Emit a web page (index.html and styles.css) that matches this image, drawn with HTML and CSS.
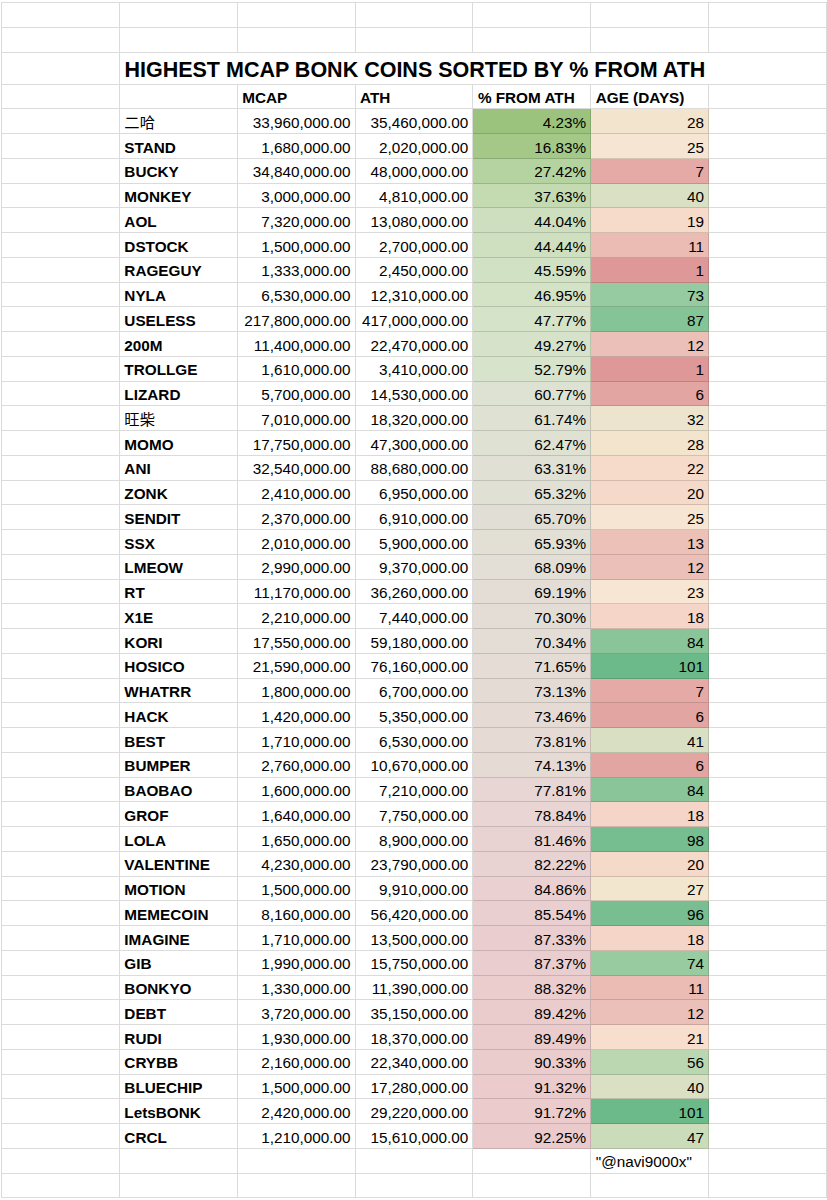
FILE: index.html
```html
<!DOCTYPE html>
<html lang="en">
<head>
<meta charset="utf-8">
<title>Highest MCAP BONK coins sorted by % from ATH</title>
<link rel="stylesheet" href="styles.css">
</head>
<body>
<div class="sheet">
  <div class="row"><div class="c"></div><div class="c"></div><div class="c"></div><div class="c"></div><div class="c"></div><div class="c"></div><div class="c"></div></div>
  <div class="row"><div class="c"></div><div class="c"></div><div class="c"></div><div class="c"></div><div class="c"></div><div class="c"></div><div class="c"></div></div>
  <div class="row title"><div class="c"></div><div class="c t">HIGHEST MCAP BONK COINS SORTED BY % FROM ATH</div></div>
  <div class="row"><div class="c"></div><div class="c"></div><div class="c h">MCAP</div><div class="c h">ATH</div><div class="c h">% FROM ATH</div><div class="c h">AGE (DAYS)</div><div class="c"></div></div>

  <div class="row"><div class="c"></div><div class="c n cjk">二哈</div><div class="c r">33,960,000.00</div><div class="c r">35,460,000.00</div><div class="c r" style="background:#9bc37d">4.23%</div><div class="c r" style="background:#f2e4cd">28</div><div class="c"></div></div>
  <div class="row"><div class="c"></div><div class="c n">STAND</div><div class="c r">1,680,000.00</div><div class="c r">2,020,000.00</div><div class="c r" style="background:#a3c888">16.83%</div><div class="c r" style="background:#f6e5d2">25</div><div class="c"></div></div>
  <div class="row"><div class="c"></div><div class="c n">BUCKY</div><div class="c r">34,840,000.00</div><div class="c r">48,000,000.00</div><div class="c r" style="background:#b4d3a0">27.42%</div><div class="c r" style="background:#e5aaa6">7</div><div class="c"></div></div>
  <div class="row"><div class="c"></div><div class="c n">MONKEY</div><div class="c r">3,000,000.00</div><div class="c r">4,810,000.00</div><div class="c r" style="background:#c4dbb2">37.63%</div><div class="c r" style="background:#dae0c4">40</div><div class="c"></div></div>
  <div class="row"><div class="c"></div><div class="c n">AOL</div><div class="c r">7,320,000.00</div><div class="c r">13,080,000.00</div><div class="c r" style="background:#cddfbe">44.04%</div><div class="c r" style="background:#f6daca">19</div><div class="c"></div></div>
  <div class="row"><div class="c"></div><div class="c n">DSTOCK</div><div class="c r">1,500,000.00</div><div class="c r">2,700,000.00</div><div class="c r" style="background:#cee0bf">44.44%</div><div class="c r" style="background:#eabcb4">11</div><div class="c"></div></div>
  <div class="row"><div class="c"></div><div class="c n">RAGEGUY</div><div class="c r">1,333,000.00</div><div class="c r">2,450,000.00</div><div class="c r" style="background:#d1e1c3">45.59%</div><div class="c r" style="background:#df9898">1</div><div class="c"></div></div>
  <div class="row"><div class="c"></div><div class="c n">NYLA</div><div class="c r">6,530,000.00</div><div class="c r">12,310,000.00</div><div class="c r" style="background:#d4e3c6">46.95%</div><div class="c r" style="background:#96caa0">73</div><div class="c"></div></div>
  <div class="row"><div class="c"></div><div class="c n">USELESS</div><div class="c r">217,800,000.00</div><div class="c r">417,000,000.00</div><div class="c r" style="background:#d5e3c8">47.77%</div><div class="c r" style="background:#85c496">87</div><div class="c"></div></div>
  <div class="row"><div class="c"></div><div class="c n">200M</div><div class="c r">11,400,000.00</div><div class="c r">22,470,000.00</div><div class="c r" style="background:#d6e3ca">49.27%</div><div class="c r" style="background:#ebc0b8">12</div><div class="c"></div></div>
  <div class="row"><div class="c"></div><div class="c n">TROLLGE</div><div class="c r">1,610,000.00</div><div class="c r">3,410,000.00</div><div class="c r" style="background:#d8e3cb">52.79%</div><div class="c r" style="background:#df9898">1</div><div class="c"></div></div>
  <div class="row"><div class="c"></div><div class="c n">LIZARD</div><div class="c r">5,700,000.00</div><div class="c r">14,530,000.00</div><div class="c r" style="background:#dee2d2">60.77%</div><div class="c r" style="background:#e3a5a2">6</div><div class="c"></div></div>
  <div class="row"><div class="c"></div><div class="c n cjk">旺柴</div><div class="c r">7,010,000.00</div><div class="c r">18,320,000.00</div><div class="c r" style="background:#dfe2d2">61.74%</div><div class="c r" style="background:#ede4cd">32</div><div class="c"></div></div>
  <div class="row"><div class="c"></div><div class="c n">MOMO</div><div class="c r">17,750,000.00</div><div class="c r">47,300,000.00</div><div class="c r" style="background:#dfe1d3">62.47%</div><div class="c r" style="background:#f2e4cd">28</div><div class="c"></div></div>
  <div class="row"><div class="c"></div><div class="c n">ANI</div><div class="c r">32,540,000.00</div><div class="c r">88,680,000.00</div><div class="c r" style="background:#e0e1d4">63.31%</div><div class="c r" style="background:#f6dbcb">22</div><div class="c"></div></div>
  <div class="row"><div class="c"></div><div class="c n">ZONK</div><div class="c r">2,410,000.00</div><div class="c r">6,950,000.00</div><div class="c r" style="background:#e1e0d5">65.32%</div><div class="c r" style="background:#f5d9c9">20</div><div class="c"></div></div>
  <div class="row"><div class="c"></div><div class="c n">SENDIT</div><div class="c r">2,370,000.00</div><div class="c r">6,910,000.00</div><div class="c r" style="background:#e1dfd5">65.70%</div><div class="c r" style="background:#f6e5d2">25</div><div class="c"></div></div>
  <div class="row"><div class="c"></div><div class="c n">SSX</div><div class="c r">2,010,000.00</div><div class="c r">5,900,000.00</div><div class="c r" style="background:#e2dfd5">65.93%</div><div class="c r" style="background:#ebc1b8">13</div><div class="c"></div></div>
  <div class="row"><div class="c"></div><div class="c n">LMEOW</div><div class="c r">2,990,000.00</div><div class="c r">9,370,000.00</div><div class="c r" style="background:#e3ded6">68.09%</div><div class="c r" style="background:#ebc0b8">12</div><div class="c"></div></div>
  <div class="row"><div class="c"></div><div class="c n">RT</div><div class="c r">11,170,000.00</div><div class="c r">36,260,000.00</div><div class="c r" style="background:#e3ddd6">69.19%</div><div class="c r" style="background:#f8e6d4">23</div><div class="c"></div></div>
  <div class="row"><div class="c"></div><div class="c n">X1E</div><div class="c r">2,210,000.00</div><div class="c r">7,440,000.00</div><div class="c r" style="background:#e4ddd6">70.30%</div><div class="c r" style="background:#f4d5c8">18</div><div class="c"></div></div>
  <div class="row"><div class="c"></div><div class="c n">KORI</div><div class="c r">17,550,000.00</div><div class="c r">59,180,000.00</div><div class="c r" style="background:#e4ddd6">70.34%</div><div class="c r" style="background:#8ac599">84</div><div class="c"></div></div>
  <div class="row"><div class="c"></div><div class="c n">HOSICO</div><div class="c r">21,590,000.00</div><div class="c r">76,160,000.00</div><div class="c r" style="background:#e5dcd6">71.65%</div><div class="c r" style="background:#6cb98a">101</div><div class="c"></div></div>
  <div class="row"><div class="c"></div><div class="c n">WHATRR</div><div class="c r">1,800,000.00</div><div class="c r">6,700,000.00</div><div class="c r" style="background:#e5dbd5">73.13%</div><div class="c r" style="background:#e5aaa6">7</div><div class="c"></div></div>
  <div class="row"><div class="c"></div><div class="c n">HACK</div><div class="c r">1,420,000.00</div><div class="c r">5,350,000.00</div><div class="c r" style="background:#e6dad5">73.46%</div><div class="c r" style="background:#e3a5a2">6</div><div class="c"></div></div>
  <div class="row"><div class="c"></div><div class="c n">BEST</div><div class="c r">1,710,000.00</div><div class="c r">6,530,000.00</div><div class="c r" style="background:#e6dad5">73.81%</div><div class="c r" style="background:#d8dfc3">41</div><div class="c"></div></div>
  <div class="row"><div class="c"></div><div class="c n">BUMPER</div><div class="c r">2,760,000.00</div><div class="c r">10,670,000.00</div><div class="c r" style="background:#e6dad5">74.13%</div><div class="c r" style="background:#e3a5a2">6</div><div class="c"></div></div>
  <div class="row"><div class="c"></div><div class="c n">BAOBAO</div><div class="c r">1,600,000.00</div><div class="c r">7,210,000.00</div><div class="c r" style="background:#e8d6d4">77.81%</div><div class="c r" style="background:#8ac599">84</div><div class="c"></div></div>
  <div class="row"><div class="c"></div><div class="c n">GROF</div><div class="c r">1,640,000.00</div><div class="c r">7,750,000.00</div><div class="c r" style="background:#e8d5d4">78.84%</div><div class="c r" style="background:#f4d5c8">18</div><div class="c"></div></div>
  <div class="row"><div class="c"></div><div class="c n">LOLA</div><div class="c r">1,650,000.00</div><div class="c r">8,900,000.00</div><div class="c r" style="background:#e9d3d2">81.46%</div><div class="c r" style="background:#76bd90">98</div><div class="c"></div></div>
  <div class="row"><div class="c"></div><div class="c n">VALENTINE</div><div class="c r">4,230,000.00</div><div class="c r">23,790,000.00</div><div class="c r" style="background:#e9d2d2">82.22%</div><div class="c r" style="background:#f5d9c9">20</div><div class="c"></div></div>
  <div class="row"><div class="c"></div><div class="c n">MOTION</div><div class="c r">1,500,000.00</div><div class="c r">9,910,000.00</div><div class="c r" style="background:#ead0d0">84.86%</div><div class="c r" style="background:#f3e6cf">27</div><div class="c"></div></div>
  <div class="row"><div class="c"></div><div class="c n">MEMECOIN</div><div class="c r">8,160,000.00</div><div class="c r">56,420,000.00</div><div class="c r" style="background:#eacfd0">85.54%</div><div class="c r" style="background:#79be91">96</div><div class="c"></div></div>
  <div class="row"><div class="c"></div><div class="c n">IMAGINE</div><div class="c r">1,710,000.00</div><div class="c r">13,500,000.00</div><div class="c r" style="background:#eacecf">87.33%</div><div class="c r" style="background:#f4d5c8">18</div><div class="c"></div></div>
  <div class="row"><div class="c"></div><div class="c n">GIB</div><div class="c r">1,990,000.00</div><div class="c r">15,750,000.00</div><div class="c r" style="background:#eacecf">87.37%</div><div class="c r" style="background:#98cba0">74</div><div class="c"></div></div>
  <div class="row"><div class="c"></div><div class="c n">BONKYO</div><div class="c r">1,330,000.00</div><div class="c r">11,390,000.00</div><div class="c r" style="background:#ebcdce">88.32%</div><div class="c r" style="background:#eabcb4">11</div><div class="c"></div></div>
  <div class="row"><div class="c"></div><div class="c n">DEBT</div><div class="c r">3,720,000.00</div><div class="c r">35,150,000.00</div><div class="c r" style="background:#ebcccd">89.42%</div><div class="c r" style="background:#ebc0b8">12</div><div class="c"></div></div>
  <div class="row"><div class="c"></div><div class="c n">RUDI</div><div class="c r">1,930,000.00</div><div class="c r">18,370,000.00</div><div class="c r" style="background:#ebcccd">89.49%</div><div class="c r" style="background:#f7decd">21</div><div class="c"></div></div>
  <div class="row"><div class="c"></div><div class="c n">CRYBB</div><div class="c r">2,160,000.00</div><div class="c r">22,340,000.00</div><div class="c r" style="background:#ebcccd">90.33%</div><div class="c r" style="background:#bbd7b1">56</div><div class="c"></div></div>
  <div class="row"><div class="c"></div><div class="c n">BLUECHIP</div><div class="c r">1,500,000.00</div><div class="c r">17,280,000.00</div><div class="c r" style="background:#ebcbcc">91.32%</div><div class="c r" style="background:#dae0c4">40</div><div class="c"></div></div>
  <div class="row"><div class="c"></div><div class="c n">LetsBONK</div><div class="c r">2,420,000.00</div><div class="c r">29,220,000.00</div><div class="c r" style="background:#ebcbcc">91.72%</div><div class="c r" style="background:#6cb98a">101</div><div class="c"></div></div>
  <div class="row"><div class="c"></div><div class="c n">CRCL</div><div class="c r">1,210,000.00</div><div class="c r">15,610,000.00</div><div class="c r" style="background:#ebcacc">92.25%</div><div class="c r" style="background:#cbdcba">47</div><div class="c"></div></div>

  <div class="row"><div class="c"></div><div class="c"></div><div class="c"></div><div class="c"></div><div class="c"></div><div class="c">"@navi9000x"</div><div class="c"></div></div>
  <div class="row"><div class="c"></div><div class="c"></div><div class="c"></div><div class="c"></div><div class="c"></div><div class="c"></div><div class="c"></div></div>
</div>
</body>
</html>
```

FILE: styles.css
```css
* {
  box-sizing: border-box;
}

body {
  margin: 0;
  background: #ffffff;
  color: #000000;
  font-family: "Liberation Sans", Arial, "Noto Sans CJK SC", sans-serif;
}

.sheet {
  margin: 2px 0 0 1px;
  width: 826px;
  border-top: 1px solid rgba(0, 0, 0, 0.14);
  border-left: 1px solid rgba(0, 0, 0, 0.14);
}

.row {
  display: grid;
  grid-template-columns: repeat(7, 117.857px);
  height: 24.75px;
}

.row.title {
  height: 32px;
}

.c {
  border-right: 1px solid rgba(0, 0, 0, 0.14);
  border-bottom: 1px solid rgba(0, 0, 0, 0.14);
  font-size: 15.3px;
  line-height: 17px;
  padding: 4.6px 4px 0 4.5px;
  white-space: nowrap;
  overflow: hidden;
}

.t {
  grid-column: 2 / 8;
  font-size: 21.5px;
  font-weight: 700;
  line-height: 24px;
  padding-top: 5.4px;
  padding-left: 4.6px;
}

.h,
.n {
  font-weight: 700;
}

.cjk {
  font-weight: 400;
}

.r {
  text-align: right;
  padding-right: 4px;
}
```
